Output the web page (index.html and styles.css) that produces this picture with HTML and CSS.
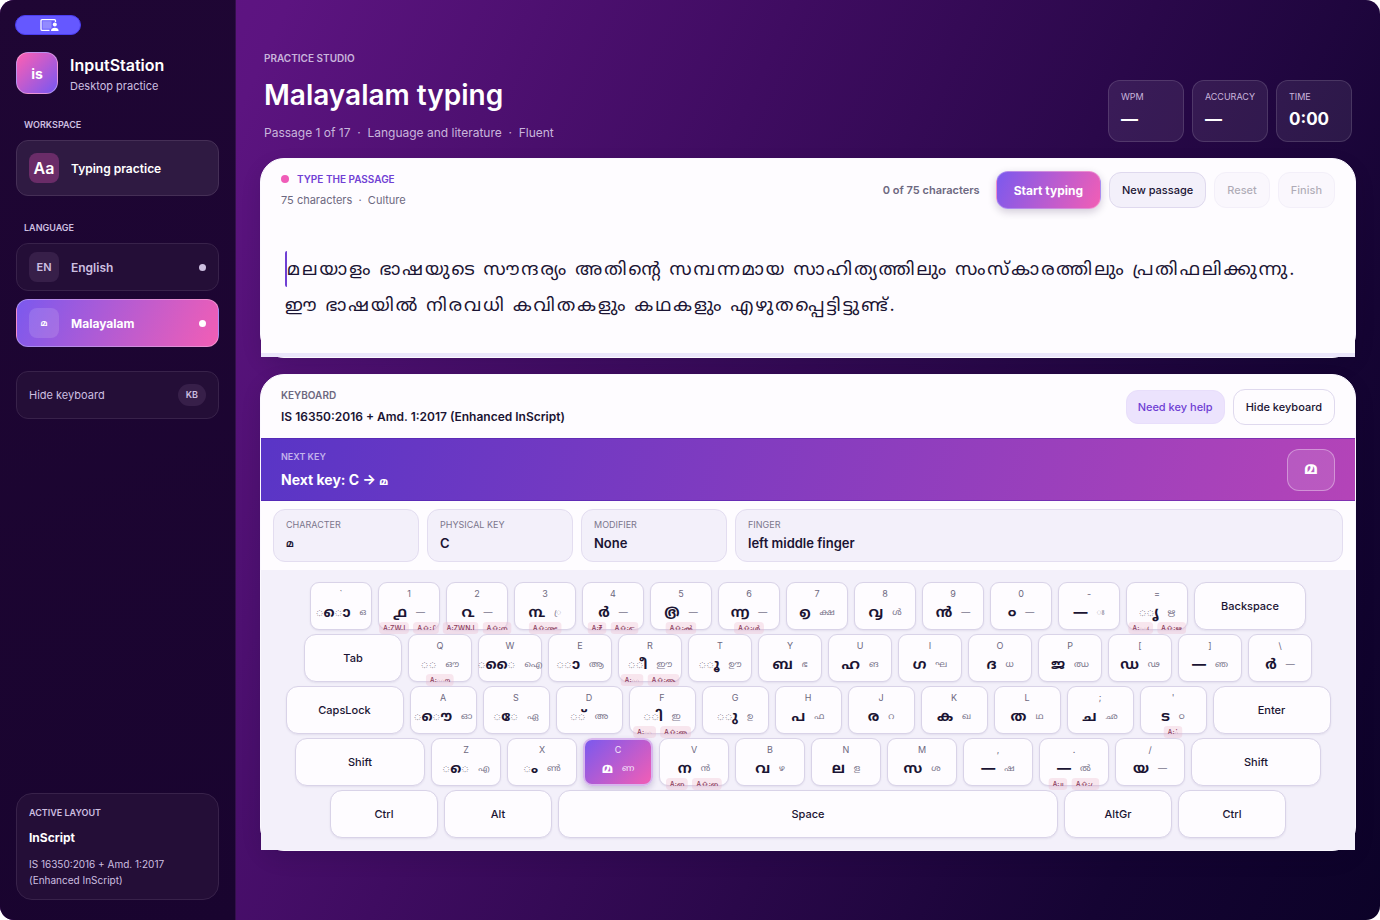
FILE: index.html
```html
<!DOCTYPE html>
<html lang="en">
<head>
    <meta charset="UTF-8">
    <meta name="viewport" content="width=device-width, initial-scale=1">
    <title>InputStation</title>
    <link rel="stylesheet" href="styles.css">
</head>
<body>
<div class="app">
    <aside class="sidebar">
        <button class="share" aria-label="Share screen">
            <svg width="20" height="14" viewBox="0 0 20 14">
                <path d="M10.500 12.300H3a1 1 0 0 1-1-1V2.700a1 1 0 0 1 1-1h12.500a1 1 0 0 1 1 1V4" fill="none" stroke="#fff" stroke-width="1.300"/>
                <rect x="3.500" y="3.200" width="9" height="7.500" fill="#fff" opacity=".3"/>
                <circle cx="15.800" cy="6.600" r="2" fill="#fff"/>
                <path d="M12 13c0-2.300 1.500-3.300 3.800-3.300s3.800 1 3.800 3.300z" fill="#fff"/>
            </svg>
        </button>
        <div class="brand">
            <div class="logo">is</div>
            <div>
                <div class="brand-name">InputStation</div>
                <div class="brand-sub">Desktop practice</div>
            </div>
        </div>

        <div class="side-label">WORKSPACE</div>
        <button class="side-btn workspace">
            <span class="side-icon pink">Aa</span>
            <span>Typing practice</span>
        </button>

        <div class="side-label lang-label">LANGUAGE</div>
        <button class="side-btn">
            <span class="side-icon">EN</span>
            <span>English</span>
            <span class="dot"></span>
        </button>
        <button class="side-btn active">
            <span class="side-icon ml">മ</span>
            <span>Malayalam</span>
            <span class="dot"></span>
        </button>
        <button class="side-btn hide-kb">
            <span>Hide keyboard</span>
            <span class="kb">KB</span>
        </button>

        <div class="layout-card">
            <div class="layout-label">ACTIVE LAYOUT</div>
            <div class="layout-name">InScript</div>
            <div class="layout-text">IS 16350:2016 + Amd. 1:2017 (Enhanced InScript)</div>
        </div>
    </aside>

    <main class="main">
        <header class="top">
            <div>
                <div class="eyebrow">PRACTICE STUDIO</div>
                <h1>Malayalam typing</h1>
                <div class="meta">Passage 1 of 17 &nbsp;·&nbsp; Language and literature &nbsp;·&nbsp; Fluent</div>
            </div>
            <div class="stats">
                <div class="stat"><span>WPM</span><b>—</b></div>
                <div class="stat"><span>ACCURACY</span><b>—</b></div>
                <div class="stat"><span>TIME</span><b>0:00</b></div>
            </div>
        </header>

        <section class="card">
            <div class="card-head">
                <div>
                    <div class="type-label"><i></i>TYPE THE PASSAGE</div>
                    <div class="type-meta">75 characters &nbsp;·&nbsp; Culture</div>
                </div>
                <div class="actions">
                    <span class="count">0 of 75 characters</span>
                    <button class="btn primary">Start typing</button>
                    <button class="btn">New passage</button>
                    <button class="btn" disabled>Reset</button>
                    <button class="btn" disabled>Finish</button>
                </div>
            </div>
            <p class="passage" lang="ml"><span class="caret"></span>മലയാളം ഭാഷയുടെ സൗന്ദര്യം അതിന്റെ സമ്പന്നമായ സാഹിത്യത്തിലും സംസ്കാരത്തിലും പ്രതിഫലിക്കുന്നു.<br>ഈ ഭാഷയിൽ നിരവധി കവിതകളും കഥകളും എഴുതപ്പെട്ടിട്ടുണ്ട്.</p>
            <div class="progress"></div>
        </section>

        <section class="card">
            <div class="kb-head">
                <div>
                    <div class="kb-label">KEYBOARD</div>
                    <div class="kb-title">IS 16350:2016 + Amd. 1:2017 (Enhanced InScript)</div>
                </div>
                <div class="kb-actions">
                    <button class="btn help">Need key help</button>
                    <button class="btn white">Hide keyboard</button>
                </div>
            </div>
            <div class="next">
                <div>
                    <div class="next-label">NEXT KEY</div>
                    <div class="next-text">Next key: C → <span class="ml">മ</span></div>
                </div>
                <div class="next-char">മ</div>
            </div>
            <div class="infos">
                <div class="info"><span>CHARACTER</span><b class="ml">മ</b></div>
                <div class="info"><span>PHYSICAL KEY</span><b>C</b></div>
                <div class="info"><span>MODIFIER</span><b>None</b></div>
                <div class="info wide"><span>FINGER</span><b>left middle finger</b></div>
            </div>
            <div class="keyboard" id="keyboard"></div>
        </section>
    </main>
</div>
<script src="script.js"></script>
</body>
</html>
```

FILE: styles.css
```css
* {
    box-sizing: border-box;
}

body {
    margin: 0;
    background: #fff;
    font-family: Inter, "Noto Sans Malayalam", sans-serif;
    color: #1b1433;
}

button {
    font: inherit;
    color: inherit;
    cursor: pointer;
}

.app {
    display: flex;
    min-height: 100vh;
    border-radius: 14px;
    overflow: hidden;
    background: linear-gradient(115deg, #641488 0%, #5c1480 16%, #3f0c61 44%, #150433 84%, #0c0228 100%);
}

/* sidebar */
.sidebar {
    display: flex;
    flex-direction: column;
    flex: 0 0 236px;
    padding: 15px 16px 20px;
    background: linear-gradient(160deg, #1f0634, #19042f);
    border-right: 1px solid #33104c;
    color: #cdbfe0;
}

.share {
    display: flex;
    align-items: center;
    justify-content: center;
    width: 66px;
    height: 20px;
    margin-left: -1px;
    padding: 0 0 0 2px;
    border: 1px solid #4b3df0;
    border-radius: 10px;
    background: #6558ff;
}

.brand {
    display: flex;
    align-items: center;
    gap: 12px;
    height: 42px;
    margin-top: 17px;
}

.logo {
    display: grid;
    place-items: center;
    width: 42px;
    height: 42px;
    border: 1px solid rgba(255, 255, 255, .35);
    border-radius: 12px;
    background: linear-gradient(135deg, #ff5fb2, #7657f2);
    color: #fff;
    font-size: 14px;
    font-weight: 700;
}

.brand-name {
    padding-top: 4px;
    color: #fff;
    font-size: 16px;
    font-weight: 600;
    line-height: 22px;
}

.brand-sub {
    font-size: 11px;
    line-height: 20px;
}

.side-label {
    margin: 24px 8px 8px;
    font-size: 9px;
    font-weight: 600;
    line-height: 14px;
}

.side-btn {
    display: flex;
    align-items: center;
    gap: 12px;
    height: 48px;
    padding: 0 12px;
    border: 1px solid #38224a;
    border-radius: 12px;
    background: #240e37;
    font-size: 12px;
    font-weight: 600;
    text-align: left;
}

.workspace {
    height: 56px;
    background: #2f1a42;
    border-color: #452f56;
    color: #fff;
}

.side-icon {
    display: grid;
    place-items: center;
    width: 30px;
    height: 30px;
    border-radius: 8px;
    background: #371f49;
    font-size: 11px;
    font-weight: 600;
}

.pink {
    background: #6a2c68;
    font-size: 16px;
}

.side-btn .ml {
    font-size: 9px;
}

.lang-label {
    margin-top: 25px;
}

.active {
    margin-top: 8px;
    border-color: rgba(255, 255, 255, .3);
    background: linear-gradient(115deg, #7b59ee, #f25eb5);
    color: #fff;
    font-weight: 700;
}

.active .side-icon {
    background: rgba(255, 255, 255, .13);
}

.dot {
    width: 7px;
    height: 7px;
    margin-left: auto;
    border-radius: 50%;
    background: currentColor;
}

.hide-kb {
    justify-content: space-between;
    margin-top: 24px;
    font-size: 11px;
    font-weight: 400;
}

.kb {
    padding: 0 8px;
    border-radius: 11px;
    background: #371f49;
    font-size: 9px;
    font-weight: 600;
    line-height: 22px;
}

.layout-card {
    margin-top: auto;
    padding: 12px 12px 11px;
    border: 1px solid #38224a;
    border-radius: 16px;
    background: #240e37;
}

.layout-label {
    font-size: 9px;
    font-weight: 600;
    line-height: 14px;
}

.layout-name {
    margin: 9px 0;
    color: #fff;
    font-size: 12px;
    font-weight: 700;
    line-height: 18px;
}

.layout-text {
    font-size: 10px;
    line-height: 16px;
}

/* main column */
.main {
    flex: 1;
    min-width: 0;
    padding: 50px 24px 24px;
}

.top {
    display: flex;
    align-items: flex-end;
    justify-content: space-between;
    padding: 0 4px;
    margin-bottom: 16px;
    color: #c9b5dc;
}

.eyebrow {
    font-size: 10px;
    font-weight: 600;
    line-height: 16px;
}

h1 {
    margin: 10px 0;
    color: #fff;
    font-size: 28px;
    font-weight: 600;
    line-height: 38px;
}

.meta {
    font-size: 12px;
    line-height: 18px;
}

.stats {
    display: flex;
    gap: 8px;
}

.stat {
    min-width: 76px;
    height: 62px;
    padding: 10px 12px;
    border: 1px solid rgba(255, 255, 255, .13);
    border-radius: 12px;
    background: rgba(255, 255, 255, .08);
}

.stat span,
.stat b {
    display: block;
}

.stat span {
    font-size: 9px;
    line-height: 12px;
}

.stat b {
    margin-top: 4px;
    color: #fff;
    font-size: 17px;
    font-weight: 700;
    line-height: 24px;
}

.card {
    margin-bottom: 16px;
    border: 1px solid #fbf9ff;
    border-radius: 24px;
    background: #fefcff;
    box-shadow: 0 8px 20px rgba(10, 0, 30, .12);
}

.card-head {
    display: flex;
    align-items: center;
    justify-content: space-between;
    padding: 11px 20px 13px;
}

.type-label {
    display: flex;
    align-items: center;
    gap: 8px;
    color: #7040d4;
    font-size: 10px;
    font-weight: 600;
    line-height: 18px;
}

.type-label i {
    width: 8px;
    height: 8px;
    border-radius: 50%;
    background: #f05cb8;
}

.type-meta {
    margin-top: 2px;
    color: #6d6880;
    font-size: 11px;
    line-height: 20px;
}

.actions,
.kb-actions {
    display: flex;
    align-items: center;
    gap: 8px;
}

.count {
    margin-right: 8px;
    color: #6d6880;
    font-size: 11px;
    font-weight: 600;
}

.btn {
    height: 36px;
    padding: 0 12px;
    border: 1px solid #dfd9ee;
    border-radius: 12px;
    background: #f3f0fa;
    font-size: 11px;
    font-weight: 500;
}

.btn:disabled {
    color: #1b1433;
    opacity: .35;
}

.primary {
    height: 38px;
    padding: 0 17px;
    border-color: rgba(255, 255, 255, .3);
    background: linear-gradient(115deg, #7b59ee, #f25eb5);
    box-shadow: 0 3px 8px rgba(30, 10, 60, .2);
    color: #fff;
    font-size: 12px;
    font-weight: 700;
}

.passage {
    margin: 0;
    padding: 28px 24px 30px;
    background: #fefcff;
    font-size: 18px;
    letter-spacing: 2px;
    line-height: 36px;
}

.caret {
    display: inline-block;
    width: 4px;
    height: 36px;
    margin-right: -2px;
    border-left: 2px solid #7040d4;
    border-radius: 3px;
    vertical-align: top;
}

.progress {
    height: 4px;
    background: #ebe6fb;
}

/* keyboard card */
.kb-head {
    display: flex;
    align-items: center;
    justify-content: space-between;
    height: 63px;
    padding: 0 20px;
}

.kb-label {
    color: #6d6880;
    font-size: 10px;
    font-weight: 600;
    line-height: 18px;
}

.kb-title {
    margin-top: 3px;
    font-size: 12px;
    font-weight: 600;
    line-height: 20px;
}

.help {
    height: 34px;
    padding: 0 11px;
    border-color: #e8defb;
    background: #ece3fd;
    color: #7040d4;
}

.white {
    background: #fefcff;
}

.next {
    display: flex;
    align-items: center;
    justify-content: space-between;
    height: 63px;
    padding: 0 20px;
    border: 1px solid rgba(80, 30, 170, .5);
    border-width: 1px 0;
    background: linear-gradient(105deg, #5935c6, #b444b8);
    color: #fff;
}

.next-label {
    color: #c3b3ec;
    font-size: 9px;
    font-weight: 600;
    line-height: 16px;
}

.next-text {
    margin-top: 5px;
    font-size: 14px;
    font-weight: 700;
    line-height: 20px;
}

.next-text .ml {
    font-size: 11px;
}

.next-char {
    display: grid;
    place-items: center;
    width: 48px;
    height: 42px;
    border: 1px solid rgba(255, 255, 255, .35);
    border-radius: 12px;
    background: rgba(255, 255, 255, .12);
    font-size: 17px;
    font-weight: 700;
}

.infos {
    display: flex;
    gap: 8px;
    padding: 8px 12px;
}

.info {
    flex: 0 0 146px;
    height: 53px;
    padding: 7px 12px;
    border: 1px solid #e3ddf0;
    border-radius: 12px;
    background: #f3f0fa;
}

.info.wide {
    flex: 1;
}

.info span,
.info b {
    display: block;
}

.info span {
    color: #7b768c;
    font-size: 9px;
    line-height: 16px;
}

.info b {
    font-size: 13px;
    font-weight: 600;
    line-height: 20px;
}

.info b.ml {
    font-size: 10px;
}

.keyboard {
    display: flex;
    flex-direction: column;
    gap: 4px;
    padding: 12px;
    background: #f3f0fa;
}

.row {
    display: flex;
    justify-content: center;
    gap: 6px;
}

.key {
    position: relative;
    flex: 0 1 62px;
    min-width: 0;
    height: 48px;
    padding: 0;
    border: 1px solid #d9d3e8;
    border-radius: 9px;
    background: #fefcff;
    box-shadow: 0 1px 2px rgba(40, 20, 90, .08);
    white-space: nowrap;
}

.row-2 .key { flex-basis: 64px; }
.row-3 .key { flex-basis: 67px; }
.row-4 .key { flex-basis: 70px; }

.row .mod {
    flex-basis: 108px;
    border-radius: 12px;
    font-size: 11px;
    font-weight: 500;
}

.row .backspace { flex-basis: 112px; }
.row .tab { flex-basis: 98px; }
.row .capslock, .row .enter { flex-basis: 118px; }
.row .shift { flex-basis: 130px; }
.row .space { flex-basis: 500px; }

.cap,
.glyphs {
    display: flex;
    align-items: center;
    justify-content: center;
}

.cap {
    height: 12px;
    color: #6d6880;
    font-size: 9px;
}

.glyphs {
    gap: 9px;
    height: 20px;
    margin: 3px 0;
}

.glyphs b {
    display: flex;
    font-size: 14px;
    font-weight: 700;
    line-height: 20px;
}

.glyphs i {
    font-style: normal;
}

.glyphs small {
    color: #7b768c;
    font-size: 9px;
    line-height: 16px;
}

.tags {
    position: absolute;
    left: 50%;
    bottom: -5px;
    display: flex;
    gap: 4px;
    transform: translateX(-50%);
}

/* the lower strip stays empty so the letters end at the key's edge */
.tag {
    height: 12px;
    padding: 0 4px;
    overflow: hidden;
    border-bottom: 4px solid transparent;
    border-radius: 4px;
    background: rgba(235, 180, 200, .3);
    color: #8c3c5c;
    font-size: 7px;
    font-weight: 500;
    line-height: 13px;
}

.hot {
    border: 2px solid #d7b6ee;
    background: linear-gradient(135deg, #7b59ee, #f25eb5);
    box-shadow: 0 3px 6px rgba(40, 20, 90, .2);
    color: #fff;
}

.hot .cap,
.hot small {
    color: #f3e6fb;
}
```

FILE: script.js
```js
// [label, base, shift, tags]
const rows = [
    [
        ["`", "◌ൊ", "ഒ"], ["1", "൧", "—", ["A:ZWJ", "A⇧:ഽ"]], ["2", "൨", "—", ["A:ZWNJ", "A⇧:൱"]],
        ["3", "൩", "◌്ര", ["A⇧:൲"]], ["4", "ർ", "—", ["A:₹", "A⇧:൳"]], ["5", "൫", "—", ["A⇧:ൿ"]],
        ["6", "൬", "—", ["A⇧:ൾ"]], ["7", "൭", "ക്ഷ"], ["8", "൮", "ൾ"], ["9", "ൻ", "—"], ["0", "൦", "—"],
        ["-", "—", "ഃ"], ["=", "◌ൃ", "ഋ", ["A:◌ൄ", "A⇧:ൠ"]], ["Backspace"]
    ],
    [
        ["Tab"], ["Q", "◌◌", "ഔ", ["A:◌ൗ"]], ["W", "◌ൈ", "ഐ"], ["E", "◌ാ", "ആ"],
        ["R", "◌ീ", "ഈ", ["A:◌ൣ", "A⇧:ൡ"]], ["T", "◌ൂ", "ഊ"], ["Y", "ബ", "ഭ"], ["U", "ഹ", "ങ"],
        ["I", "ഗ", "ഘ"], ["O", "ദ", "ധ"], ["P", "ജ", "ഝ"], ["[", "ഡ", "ഢ"], ["]", "—", "ഞ"], ["\\", "ർ", "—"]
    ],
    [
        ["CapsLock"], ["A", "◌ൌ", "ഓ"], ["S", "◌േ", "ഏ"], ["D", "◌്", "അ"],
        ["F", "◌ി", "ഇ", ["A:◌ൢ", "A⇧:ഌ"]], ["G", "◌ു", "ഉ"], ["H", "പ", "ഫ"], ["J", "ര", "റ"],
        ["K", "ക", "ഖ"], ["L", "ത", "ഥ"], [";", "ച", "ഛ"], ["'", "ട", "ഠ", ["A:ൎ"]], ["Enter"]
    ],
    [
        ["Shift"], ["Z", "◌െ", "എ"], ["X", "ം", "ൺ"], ["C", "മ", "ണ"], ["V", "ന", "ൻ", ["A:ഩ", "A⇧:ഩ"]],
        ["B", "വ", "ഴ"], ["N", "ല", "ള"], ["M", "സ", "ശ"], [",", "—", "ഷ"],
        [".", "—", "ൽ", ["A:॥", "A⇧:ഺ"]], ["/", "യ", "—"], ["Shift"]
    ],
    [["Ctrl"], ["Alt"], ["Space"], ["AltGr"], ["Ctrl"]]
];

const nextKey = "C";
const keyboard = document.getElementById("keyboard");

rows.forEach((keys, i) => {
    const row = document.createElement("div");
    row.className = "row row-" + (i + 1);

    keys.forEach(([label, base, shift, tags]) => {
        const key = document.createElement("button");
        key.className = "key";
        if (!base) {
            key.classList.add("mod", label.toLowerCase());
            key.textContent = label;
        } else {
            if (label === nextKey) key.classList.add("hot");
            // keep the placeholder circle apart from the vowel sign
            const glyph = base.replace("◌", "<i>◌</i>");
            let html = `<span class="cap">${label}</span><span class="glyphs"><b>${glyph}</b><small>${shift}</small></span>`;
            if (tags) {
                html += `<span class="tags">${tags.map(t => `<span class="tag">${t}</span>`).join("")}</span>`;
            }
            key.innerHTML = html;
        }
        row.appendChild(key);
    });

    keyboard.appendChild(row);
});
```
